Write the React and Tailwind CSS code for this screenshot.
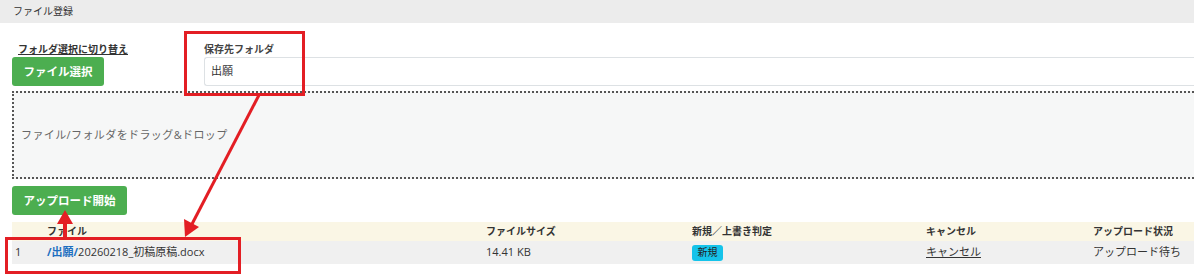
import React from "react";

export default function App() {
  return (
    <div
      className="relative w-[1194px] h-[276px] overflow-hidden bg-white text-[#333]"
      style={{ fontFamily: '"Open Sans", "Noto Sans CJK JP", sans-serif' }}
    >
      <div className="h-[23px] bg-[#ececec] pl-[13px] flex items-center text-[10px] text-[#333]">
        ファイル登録
      </div>

      <div className="pl-[12px]">
        <div className="flex">
          <div className="w-[192px] flex flex-col">
            <div className="h-[34px] flex items-end pb-[1px] pl-[6px]">
              <span className="text-[10px] font-semibold underline text-[#333] leading-[14px]">
                フォルダ選択に切り替え
              </span>
            </div>
            <button className="w-[92px] h-[29px] bg-[#4cae50] rounded-[3px] text-white text-[11.5px] font-bold flex items-center justify-center">
              ファイル選択
            </button>
          </div>
          <div className="flex-1 flex flex-col">
            <div className="h-[34px] flex items-end pb-[1px]">
              <span className="text-[10px] font-semibold text-[#444] leading-[14px]">
                保存先フォルダ
              </span>
            </div>
            <div className="h-[29px] border border-[#dde1e4] border-r-0 rounded-l-[3px] flex items-center pl-[6px] text-[11px] text-[#333]">
              出願
            </div>
          </div>
        </div>

        <div className="mt-[5px] h-[88px] border-2 border-r-0 border-dotted border-[#555] bg-[#f6f7f7] flex items-center pl-[7px] text-[11px] tracking-[0.4px] text-[#666]">
          ファイル/フォルダをドラッグ&amp;ドロップ
        </div>

        <button className="mt-[7px] w-[115px] h-[29px] bg-[#4cae50] rounded-[3px] text-white text-[11.5px] font-bold flex items-center justify-center">
          アップロード開始
        </button>

        <div className="mt-[7px] h-[19px] bg-[#faf6e5] grid grid-cols-[35px_439px_206px_234px_167px_1fr] items-center text-[10px] font-bold text-[#333]">
          <div></div>
          <div>ファイル</div>
          <div>ファイルサイズ</div>
          <div>新規／上書き判定</div>
          <div>キャンセル</div>
          <div>アップロード状況</div>
        </div>
        <div className="h-[23px] bg-[#f0f0f0] grid grid-cols-[35px_439px_206px_234px_167px_1fr] items-center text-[11px] text-[#333]">
          <div className="pl-[3px]">1</div>
          <div>
            <span className="text-[#1d6fc0] font-bold">/出願/</span>20260218_初稿原稿.docx
          </div>
          <div>14.41 KB</div>
          <div>
            <span className="inline-flex items-center justify-center w-[31px] h-[16px] rounded-[3px] bg-[#15c3ea] text-[10px] text-[#222]">
              新規
            </span>
          </div>
          <div>
            <span className="underline">キャンセル</span>
          </div>
          <div>アップロード待ち</div>
        </div>
      </div>

      {/* annotations */}
      <div className="absolute left-[184px] top-[31px] w-[121px] h-[65px] border-[3px] border-[#e31e24]"></div>
      <div className="absolute left-[5px] top-[237px] w-[236px] h-[37px] border-[3px] border-[#e31e24]"></div>
      <svg
        className="absolute left-0 top-0 pointer-events-none"
        width="1194"
        height="276"
        viewBox="0 0 1194 276"
      >
        <line x1="259" y1="95" x2="191" y2="226" stroke="#e31e24" strokeWidth="3" />
        <polygon points="185,237 199,227 184,219" fill="#e31e24" />
        <line x1="65" y1="237" x2="65" y2="222" stroke="#e31e24" strokeWidth="4" />
        <polygon points="65,210 57,224 73,224" fill="#e31e24" />
      </svg>
    </div>
  );
}
